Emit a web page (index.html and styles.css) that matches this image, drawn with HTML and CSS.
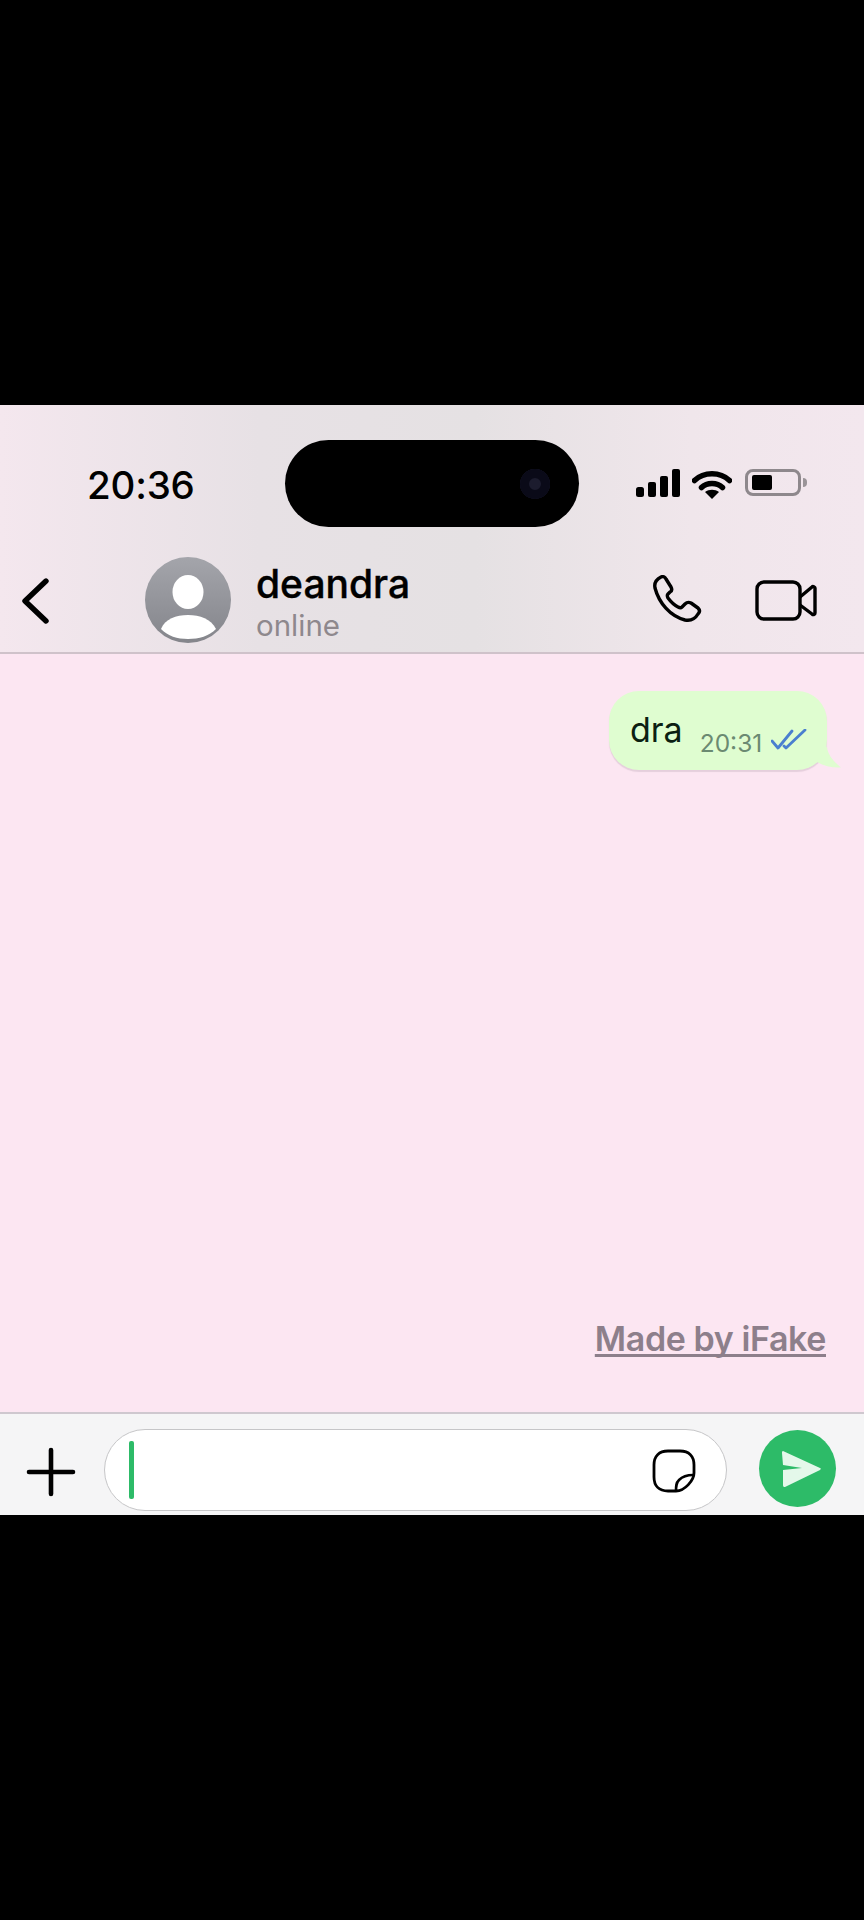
FILE: index.html
```html
<!DOCTYPE html>
<html lang="en">
<head>
<meta charset="utf-8">
<title>deandra</title>
<link rel="stylesheet" href="styles.css">
</head>
<body>
<main class="phone">
  <header class="top">
    <div class="status">
      <div class="time">20:36</div>
      <div class="island"><span class="camera"></span></div>
      <div class="indicators">
        <svg class="signal" viewBox="0 0 44 28"><rect x="0" y="18" width="8" height="10" rx="2.5"/><rect x="12" y="13" width="8" height="15" rx="2"/><rect x="24" y="7" width="8" height="21" rx="2"/><rect x="36" y="0" width="8" height="28" rx="2"/></svg>
        <svg class="wifi" viewBox="0 0 40 30"><path d="M2.5 11.5C12 2.5 28 2.5 37.5 11.5" fill="none" stroke="#000" stroke-width="5.5" stroke-linecap="round"/><path d="M9.5 18.5C15 13 25 13 30.5 18.5" fill="none" stroke="#000" stroke-width="5.5" stroke-linecap="round"/><path d="M20 30L13 23C17 20 23 20 27 23Z"/></svg>
        <div class="battery"><span class="charge"></span></div>
        <span class="cap"></span>
      </div>
    </div>
    <nav class="nav">
      <svg class="back" viewBox="0 0 28 46"><path d="M25 3L4 23L25 43" fill="none" stroke="#000" stroke-width="5.4" stroke-linecap="round" stroke-linejoin="round"/></svg>
      <div class="avatar">
        <svg viewBox="0 0 86 86"><defs><linearGradient id="av" x1="0" y1="0" x2="0" y2="1"><stop offset="0" stop-color="#a4a5ab"/><stop offset="1" stop-color="#84858b"/></linearGradient></defs><circle cx="43" cy="43" r="43" fill="url(#av)"/><ellipse cx="43" cy="35" rx="15.5" ry="17" fill="#fff"/><path d="M16 72C20 62 31 58 43 58C55 58 66 62 71 72C64 79 54 82 43 82C32 82 23 79 16 72Z" fill="#fff"/></svg>
      </div>
      <div class="contact">
        <div class="name">deandra</div>
        <div class="presence">online</div>
      </div>
      <div class="actions">
        <svg class="call" viewBox="0 0 50 48"><path d="M3 13C2 8 5 4 9 2C11 1 13 2 14 4L19 12C20 14 20 16 18 17L16 19C15 20 15 21 16 23C19 27 22 30 26 32C28 33 29 33 30 32L33 29C35 27 37 27 39 28L46 33C48 35 48 37 46 39C43 44 38 46 33 45C18 41 7 28 3 13Z" fill="none" stroke="#000" stroke-width="3.4" stroke-linejoin="round"/></svg>
        <svg class="video" viewBox="0 0 62 42"><rect x="2" y="2" width="43" height="37" rx="7" fill="none" stroke="#000" stroke-width="3.4"/><path d="M45 17L57 7C58 6 60 7 60 8V33C60 35 58 35 57 34L45 25" fill="none" stroke="#000" stroke-width="3.4" stroke-linejoin="round"/></svg>
      </div>
    </nav>
  </header>
  <section class="chat">
    <div class="bubble">
      <span class="message">dra</span>
      <span class="meta">20:31</span>
      <svg class="ticks" viewBox="0 0 36 22"><path d="M1 12L7 19L21 2M13 17L15 19L34 1" fill="none" stroke="#4a7fcf" stroke-width="2.8" stroke-linecap="round" stroke-linejoin="round"/></svg>
      <svg class="tail" viewBox="0 0 35 23"><path d="M0 0H20C21 8 26 14 34 20.5C26 21 17 19 10 15C7 18 3 20 0 21Z" fill="#dffdd0"/></svg>
    </div>
    <div class="credit">Made by iFake</div>
  </section>
  <footer class="composer">
    <svg class="plus" viewBox="0 0 50 50"><path d="M25 3V47M3 25H47" fill="none" stroke="#000" stroke-width="4.6" stroke-linecap="round"/></svg>
    <div class="field">
      <span class="caret"></span>
      <svg class="sticker" viewBox="0 0 44 44"><path d="M16 2H28C37 2 42 7 42 16V24C42 31 33 42 24 42H16C7 42 2 37 2 28V16C2 7 7 2 16 2Z" fill="#fff" stroke="#000" stroke-width="2.8"/><path d="M24 42C24 37 24 34 27 31C30 28 36 26 41 26" fill="none" stroke="#000" stroke-width="2.6"/></svg>
    </div>
    <div class="send">
      <svg viewBox="0 0 42 38"><path d="M3 1C2 1 2 2 2 3L3 15L22 18L3 20L3 35C3 37 4 37 5 37L40 20C41 19 41 18 40 18Z" fill="#e4f8ea"/></svg>
    </div>
  </footer>
</main>
</body>
</html>
```
FILE: styles.css
```css
* { box-sizing: border-box; }
html, body { margin: 0; height: 100%; }
body {
  background: #000;
  padding-top: 405px;
  font-family: Inter, "Liberation Sans", sans-serif;
  color: #000;
}
svg { display: block; flex: none; }
.phone {
  width: 864px;
  height: 1110px;
  display: flex;
  flex-direction: column;
  background: #fce6f2;
}
.top {
  height: 249px;
  background: linear-gradient(90deg, #f4e7ee 0%, #e7e1e5 30%, #e5e1e3 55%, #f0e6eb 80%, #f3e7ee 100%);
  border-bottom: 2px solid #cfc2ca;
}
.status {
  display: grid;
  grid-template-columns: 1fr 294px 1fr;
  padding-top: 35px;
  height: 140px;
}
.time {
  font-size: 38.5px;
  line-height: 44px;
  font-weight: 500;
  letter-spacing: -0.2px;
  padding: 23px 0 0 87px;
}
.island {
  position: relative;
  height: 87px;
  background: #000;
  border-radius: 44px;
}
.camera {
  position: absolute;
  left: 235px;
  top: 29px;
  width: 30px;
  height: 30px;
  border-radius: 50%;
  background: #0c0c1e;
  box-shadow: inset 0 0 0 9px #0a0a18, inset 0 0 0 15px #1c1c2e;
}
.indicators {
  display: flex;
  align-items: flex-start;
  padding: 29px 0 0 57px;
}
.signal { width: 44px; height: 28px; }
.wifi { width: 40px; height: 30px; margin-left: 12px; }
.battery {
  width: 56px;
  height: 27px;
  margin: 0 0 0 13px;
  padding: 3px 4px;
  border: 3px solid #8e888c;
  border-radius: 8px;
}
.charge {
  display: block;
  width: 20px;
  height: 100%;
  background: #000;
  border-radius: 2px;
}
.cap {
  width: 4px;
  height: 9px;
  margin: 9px 0 0 2px;
  background: #9a9498;
  border-radius: 0 4px 4px 0;
}
.nav {
  display: flex;
  align-items: flex-start;
  height: 107px;
  padding-top: 12px;
}
.back { width: 28px; height: 46px; margin: 21px 0 0 21px; }
.avatar { width: 86px; height: 86px; margin-left: 96px; }
.avatar svg { width: 100%; height: 100%; }
.contact { margin-left: 25px; flex: 1; }
.name {
  font-size: 39px;
  line-height: 44px;
  font-weight: 500;
  margin-top: 5px;
  -webkit-text-stroke: 0.4px #000;
}
.presence {
  font-size: 29.5px;
  line-height: 36px;
  color: #8e888d;
  margin-top: 1px;
}
.actions {
  display: flex;
  align-items: flex-start;
  padding: 18px 47px 0 0;
  gap: 53px;
}
.call { width: 50px; height: 48px; }
.video { width: 62px; height: 42px; margin-top: 5px; }
.chat {
  flex: 1;
  display: flex;
  flex-direction: column;
  align-items: flex-end;
  padding: 37px 37px 0 0;
}
.bubble {
  position: relative;
  display: flex;
  align-items: flex-start;
  width: 218px;
  height: 79px;
  padding: 19px 0 0 21px;
  background: #dffdd0;
  border-radius: 30px;
  box-shadow: 0 2px 1px #e5cfdc;
}
.message { font-size: 34px; line-height: 40px; color: #0b1f12; }
.meta {
  font-size: 24.5px;
  line-height: 30px;
  color: #6b8a72;
  margin: 18px 0 0 17px;
}
.ticks { width: 36px; height: 22px; margin: 19px 0 0 9px; }
.tail {
  position: absolute;
  left: 198px;
  top: 56px;
  width: 35px;
  height: 23px;
}
.credit {
  margin-top: auto;
  margin-right: 1px;
  margin-bottom: 53px;
  font-size: 34px;
  line-height: 40px;
  font-weight: 600;
  letter-spacing: -0.4px;
  color: #8d7f8b;
  text-decoration: underline;
  text-decoration-thickness: 3px;
  text-decoration-skip-ink: none;
  text-underline-offset: 3px;
}
.composer {
  height: 103px;
  display: flex;
  align-items: flex-start;
  background: #f5f5f6;
  border-top: 2px solid #cfc8cf;
}
.plus { width: 50px; height: 50px; margin: 33px 0 0 26px; }
.field {
  position: relative;
  display: flex;
  align-items: center;
  justify-content: space-between;
  width: 623px;
  height: 82px;
  margin: 15px 0 0 28px;
  padding: 0 30px 0 24px;
  background: #fff;
  border: 1.5px solid #c6c6c8;
  border-radius: 41px;
}
.caret { width: 5px; height: 58px; background: #2dbb68; border-radius: 2px; }
.sticker { width: 44px; height: 44px; margin-top: 2px; }
.send {
  width: 77px;
  height: 77px;
  margin: 16px 0 0 32px;
  padding: 20px 15px 0 21px;
  background: #2dbb68;
  border-radius: 50%;
}
.send svg { width: 42px; height: 38px; }
```
